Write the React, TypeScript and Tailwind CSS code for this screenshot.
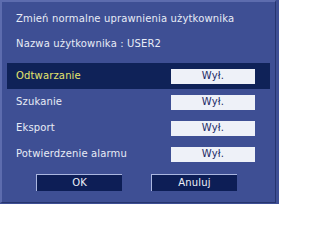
const rows = [
  { label: "Odtwarzanie", value: "Wył.", active: true },
  { label: "Szukanie", value: "Wył.", active: false },
  { label: "Eksport", value: "Wył.", active: false },
  { label: "Potwierdzenie alarmu", value: "Wył.", active: false },
];

function Row({ label, value, active }: { label: string; value: string; active: boolean }) {
  return (
    <div
      className={`flex h-[26px] items-center justify-between pl-[9px] pr-[15px] ${
        active ? "bg-[#0f2258]" : ""
      }`}
    >
      <span className={active ? "text-[#e4e46c]" : "text-[#e8ecf6]"}>{label}</span>
      <span className="flex h-[15px] w-[84px] items-center justify-center bg-[#eef1f8] text-[#1c2a66]">
        {value}
      </span>
    </div>
  );
}

function Button({ children }: { children: string }) {
  return (
    <button className="flex h-[17px] w-[86px] items-center justify-center border-t border-l border-[#aab6e0] border-r-[#1a2a5c] border-b-[#1a2a5c] bg-[#0d1e56] text-[#eef0f8]">
      {children}
    </button>
  );
}

export default function App() {
  return (
    <div className="h-[204px] w-[279px] bg-[#3e4f94]">
      <div className="flex h-[203px] w-[276px] flex-col border-t-2 border-l-2 border-r border-b border-t-[#5d6cae] border-l-[#5d6cae] border-r-[#27356e] border-b-[#27356e] font-['DejaVu_Sans',sans-serif] text-[10px] leading-none tracking-[0.15px] text-[#e8ecf6]">
        <div className="pl-[14px] pt-[12px]">Zmień normalne uprawnienia użytkownika</div>
        <div className="pl-[14px] pt-[15px]">Nazwa użytkownika : USER2</div>
        <div className="mt-[14px] ml-[5px] mr-[5px] flex flex-col">
          {rows.map((r) => (
            <Row key={r.label} {...r} />
          ))}
        </div>
        <div className="mt-[7px] flex pl-[34px] gap-[29px]">
          <Button>OK</Button>
          <Button>Anuluj</Button>
        </div>
      </div>
    </div>
  );
}
